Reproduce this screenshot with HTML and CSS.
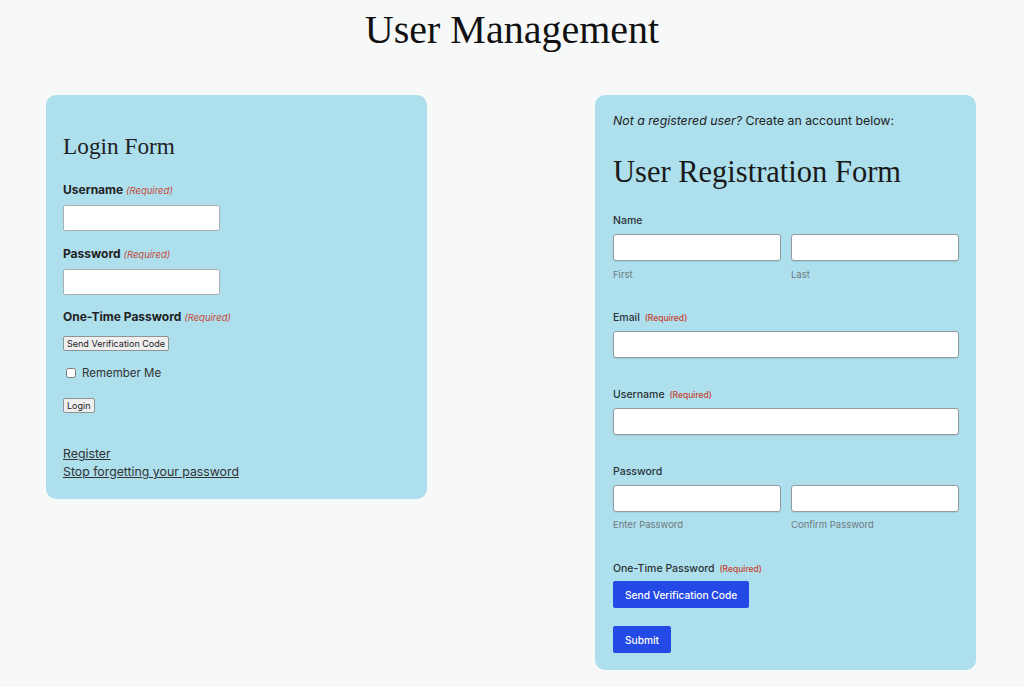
FILE: index.html
```html
<!DOCTYPE html>
<html lang="en">

<head>
    <meta charset="UTF-8">
    <meta name="viewport" content="width=device-width, initial-scale=1.0">
    <title>User Management</title>
    <link rel="stylesheet" href="styles.css">
</head>

<body>
    <h1 class="page-title">User Management</h1>

    <div class="forms">
        <div class="card login">
            <h2 class="form-title">Login Form</h2>

            <div class="login-field">
                <label class="login-label">Username <span class="req">(Required)</span></label>
                <input type="text" class="login-input">
            </div>

            <div class="login-field">
                <label class="login-label">Password <span class="req">(Required)</span></label>
                <input type="password" class="login-input">
            </div>

            <div class="login-field">
                <label class="login-label">One-Time Password <span class="req">(Required)</span></label>
                <button class="plain-btn">Send Verification Code</button>
            </div>

            <div class="remember">
                <input type="checkbox" class="remember-box">
                <span>Remember Me</span>
            </div>

            <button class="plain-btn">Login</button>

            <div class="links">
                <a href="#">Register</a>
                <a href="#">Stop forgetting your password</a>
            </div>
        </div>

        <div class="card register">
            <p class="intro"><em>Not a registered user?</em> Create an account below:</p>

            <h2 class="reg-title">User Registration Form</h2>

            <div class="field">
                <label class="field-label">Name</label>
                <div class="pair">
                    <div>
                        <input type="text" class="text-input">
                        <div class="sub-label">First</div>
                    </div>
                    <div>
                        <input type="text" class="text-input">
                        <div class="sub-label">Last</div>
                    </div>
                </div>
            </div>

            <div class="field">
                <label class="field-label">Email <span class="req-small">(Required)</span></label>
                <input type="email" class="text-input">
            </div>

            <div class="field">
                <label class="field-label">Username <span class="req-small">(Required)</span></label>
                <input type="text" class="text-input">
            </div>

            <div class="field">
                <label class="field-label">Password</label>
                <div class="pair">
                    <div>
                        <input type="password" class="text-input">
                        <div class="sub-label">Enter Password</div>
                    </div>
                    <div>
                        <input type="password" class="text-input">
                        <div class="sub-label">Confirm Password</div>
                    </div>
                </div>
            </div>

            <div class="field otp">
                <label class="field-label">One-Time Password <span class="req-small">(Required)</span></label>
                <button class="blue-btn">Send Verification Code</button>
            </div>

            <button class="blue-btn">Submit</button>
        </div>
    </div>
</body>

</html>
```

FILE: styles.css
```css
body {
    margin: 0;
    background: #f7f9f8;
    font-family: Inter, 'Noto Sans', sans-serif;
    color: #1e1e1e;
}

.page-title {
    margin: 6px 0 41px;
    font-family: 'Liberation Serif', serif;
    font-weight: 400;
    font-size: 40px;
    line-height: 48px;
    text-align: center;
    color: #111;
}

.forms {
    display: flex;
    justify-content: space-between;
    align-items: flex-start;
    padding: 0 48px 0 46px;
}

.card {
    width: 381px;
    box-sizing: border-box;
    background: #addfed;
    border-radius: 10px;
}

/* Login form */

.login {
    padding: 37px 17px 18px;
}

.form-title {
    margin: 0 0 22px;
    font-family: 'Liberation Serif', serif;
    font-weight: 400;
    font-size: 23.3px;
    line-height: 28px;
    color: #222;
}

.login-field {
    margin-bottom: 14.5px;
}

.login-label {
    display: block;
    font-size: 12px;
    font-weight: 700;
    line-height: 16px;
    margin-bottom: 6px;
    color: #222;
}

.req {
    font-size: 9.5px;
    font-weight: 400;
    font-style: italic;
    color: #c74a3a;
}

.login-input {
    display: block;
    width: 157px;
    height: 26px;
    box-sizing: border-box;
    border: 1px solid #a8b0b4;
    border-radius: 2px;
    background: #fff;
}

.plain-btn {
    display: block;
    height: 15px;
    padding: 0 3px;
    font-family: Inter, sans-serif;
    font-size: 9px;
    line-height: 13px;
    color: #222;
    background: #efefef;
    border: 1px solid #8e9396;
    border-radius: 2px;
}

.login-field .plain-btn {
    margin-top: 10px;
}

.remember {
    display: flex;
    align-items: center;
    gap: 6px;
    margin: 15px 0 18px 3px;
    font-size: 11.5px;
    line-height: 14px;
    color: #333;
}

.remember-box {
    width: 10px;
    height: 10px;
    margin: 0;
}

.links {
    display: flex;
    flex-direction: column;
    margin-top: 32px;
}

.links a {
    font-size: 12.3px;
    line-height: 18px;
    color: #333;
}

/* Registration form */

.register {
    padding: 18px 17px 17px 18px;
}

.intro {
    margin: 0;
    font-size: 12.3px;
    line-height: 16px;
    color: #222;
}

.reg-title {
    margin: 25px 0 24px;
    font-family: 'Liberation Serif', serif;
    font-weight: 400;
    font-size: 30.5px;
    line-height: 36px;
    color: #1a1a1a;
}

.field {
    margin-bottom: 30px;
}

.field-label {
    display: block;
    font-size: 10.5px;
    font-weight: 500;
    line-height: 14px;
    margin-bottom: 6px;
    color: #2b3338;
}

.req-small {
    margin-left: 2px;
    font-size: 8.5px;
    color: #c8412e;
}

.text-input {
    display: block;
    width: 100%;
    height: 27px;
    box-sizing: border-box;
    border: 1px solid #949ba0;
    border-radius: 3px;
    background: #fff;
    box-shadow: 0 1px 1px rgba(0, 0, 0, 0.08);
}

.pair {
    display: grid;
    grid-template-columns: 1fr 1fr;
    gap: 10px;
}

.sub-label {
    margin-top: 7.5px;
    font-size: 9.5px;
    line-height: 12px;
    color: #6f7a80;
}

.otp {
    margin-top: 31px;
    margin-bottom: 18px;
}

.otp .field-label {
    margin-bottom: 5px;
}

.blue-btn {
    display: block;
    height: 27px;
    padding: 0 12px;
    font-family: Inter, sans-serif;
    font-size: 10.2px;
    font-weight: 500;
    color: #fff;
    background: #2349e6;
    border: 0;
    border-radius: 2px;
}
```
